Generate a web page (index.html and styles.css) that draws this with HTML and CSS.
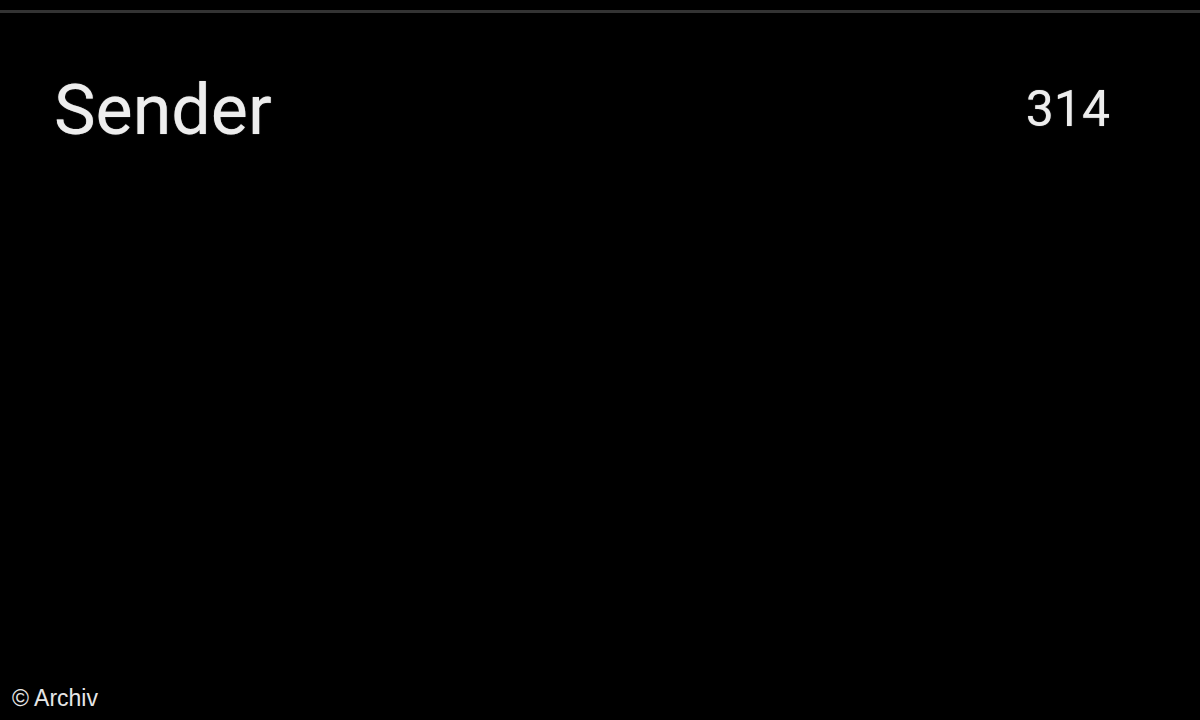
FILE: index.html
```html
<!DOCTYPE html>
<html lang="de">
<head>
    <meta charset="UTF-8">
    <title>Sender</title>
    <link rel="stylesheet" href="styles.css">
</head>
<body>
<div class="screen">
    <div class="topline"></div>
    <div class="row">
        <span class="label">Sender</span>
        <span class="count">314</span>
    </div>
    <div class="credit">© Archiv</div>
</div>
</body>
</html>
```

FILE: styles.css
```css
body {
    margin: 0;
    background-color: #000;
}

.screen {
    width: 1200px;
    height: 720px;
    background-color: #000;
    display: flex;
    flex-direction: column;
}

.topline {
    height: 3px;
    margin-top: 10px;
    background-color: #333;
}

.row {
    display: flex;
    justify-content: space-between;
    align-items: flex-start;
    padding: 57px 90px 0 54px;
    font-family: Roboto, "Noto Sans", sans-serif;
    color: #ededed;
    text-shadow: 0 0 1px rgba(255, 255, 255, 0.6);
}

.label {
    font-size: 70px;
    line-height: 80px;
}

.count {
    margin-top: 9px;
    font-size: 50px;
    line-height: 60px;
}

.credit {
    margin-top: auto;
    padding: 0 0 8px 12px;
    font-family: "Liberation Sans", Arial, sans-serif;
    font-size: 23px;
    color: #e6e6e6;
}
```
